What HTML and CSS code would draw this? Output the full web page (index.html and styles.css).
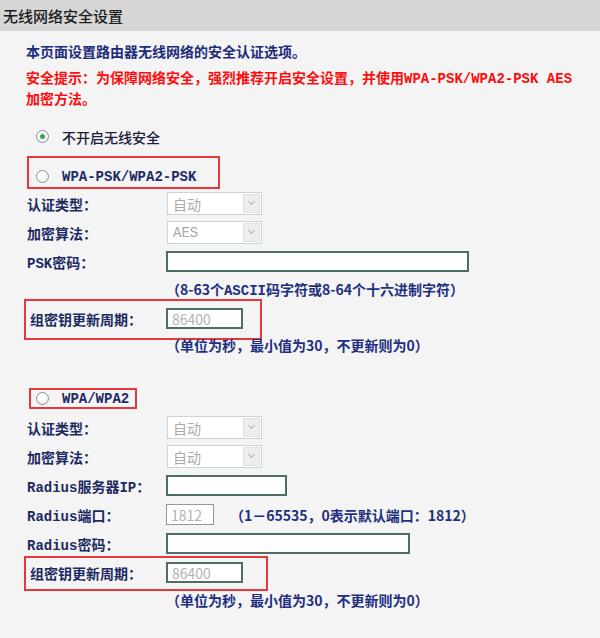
FILE: index.html
```html
<!DOCTYPE html>
<html lang="zh-CN">
<head>
    <meta charset="UTF-8">
    <title>无线网络安全设置</title>
    <link rel="stylesheet" href="styles.css">
</head>
<body>
    <header class="title">无线网络安全设置</header>
    <div class="page">
        <p class="intro">本页面设置路由器无线网络的安全认证选项。</p>
        <p class="warn">安全提示：为保障网络安全，强烈推荐开启安全设置，并使用<span class="mono">WPA-PSK/WPA2-PSK AES</span>加密方法。</p>

        <div class="opt opt-off"><span class="radio on"></span>不开启无线安全</div>

        <!-- WPA-PSK -->
        <div class="mark mark-psk">
            <div class="opt"><span class="radio"></span><span class="mono">WPA-PSK/WPA2-PSK</span></div>
        </div>
        <div class="row"><span class="lbl">认证类型：</span><span class="select"><span>自动</span><i class="arrow"></i></span></div>
        <div class="row"><span class="lbl">加密算法：</span><span class="select"><span class="mono">AES</span><i class="arrow"></i></span></div>
        <div class="row"><span class="lbl"><span class="mono">PSK</span>密码：</span><input class="field w-psk" type="text"></div>
        <div class="hint hint-top">（8-63个<span class="mono">ASCII</span>码字符或8-64个十六进制字符）</div>
        <div class="mark mark-period">
            <div class="row row-in"><span class="lbl">组密钥更新周期：</span><input class="field w-period" type="text" value="86400"></div>
        </div>
        <div class="hint hint-after">（单位为秒，最小值为30，不更新则为0）</div>

        <!-- WPA enterprise -->
        <div class="mark mark-wpa">
            <div class="opt opt-sm"><span class="radio"></span><span class="mono">WPA/WPA2</span></div>
        </div>
        <div class="row row-first"><span class="lbl">认证类型：</span><span class="select"><span>自动</span><i class="arrow"></i></span></div>
        <div class="row"><span class="lbl">加密算法：</span><span class="select"><span>自动</span><i class="arrow"></i></span></div>
        <div class="row"><span class="lbl"><span class="mono">Radius</span>服务器<span class="mono">IP</span>：</span><input class="field w-ip" type="text"></div>
        <div class="row"><span class="lbl"><span class="mono">Radius</span>端口：</span><span class="port"><input class="field w-port" type="text" value="1812"><span class="hint-inline">（1－65535，0表示默认端口：1812）</span></span></div>
        <div class="row"><span class="lbl"><span class="mono">Radius</span>密码：</span><input class="field w-pass" type="text"></div>
        <div class="mark mark-period2">
            <div class="row row-in"><span class="lbl">组密钥更新周期：</span><input class="field w-period" type="text" value="86400"></div>
        </div>
        <div class="hint hint-last">（单位为秒，最小值为30，不更新则为0）</div>
    </div>
</body>
</html>
```

FILE: styles.css
```css
body { margin: 0; background: #f4f4f4; font-family: "Noto Sans CJK SC", sans-serif; font-size: 14px; color: #1f2d6b; }
.mono { font-family: "Liberation Mono", "Noto Sans CJK SC", monospace; line-height: 1; }
.title { height: 31px; line-height: 31px; padding-left: 3px; background: #d6d6d6; color: #1c1c1c; font-size: 15px; font-weight: 500; }
.page { padding-bottom: 20px; }
.intro { margin: 10px 0 5px 26px; height: 21px; line-height: 21px; color: #1e2b7c; font-weight: 600; }
.warn { margin: 0 0 0 26px; max-width: 552px; line-height: 21px; color: #ff0d0d; font-weight: 600; }

.opt { display: flex; align-items: center; gap: 13px; height: 21px; color: #1f2b66; font-weight: 600; }
.opt-off { padding-left: 36px; margin-top: 17px; color: #1c1c3a; font-weight: 500; }
.opt-sm { height: 17px; }
.radio { width: 13px; height: 13px; box-sizing: border-box; border-radius: 50%; border: 1px solid #8c939b; background: radial-gradient(circle at 40% 35%, #fff 30%, #dfe3e8); display: flex; align-items: center; justify-content: center; }
.radio.on::after { content: ""; width: 5px; height: 5px; border-radius: 50%; background: #3ea34e; }

/* red annotation boxes */
.mark { border: 2px solid #e5383b; box-sizing: border-box; }
.mark-psk { margin: 9px 0 0 27px; width: 193px; height: 33px; padding: 8px 0 0 7px; }
.mark-period { margin-left: 24px; width: 238px; height: 41px; padding: 7px 0 0 4px; }
.mark-wpa { margin: 33px 0 0 29px; width: 108px; height: 21px; padding-left: 5px; }
.mark-period2 { margin: -2px 0 0 24px; width: 244px; height: 35px; padding: 4px 0 0 4px; }

.row { display: grid; grid-template-columns: 139px auto; align-items: center; height: 29px; padding-left: 27px; }
.row-in { grid-template-columns: 136px auto; height: 21px; padding-left: 0; }
.row-first { margin-top: 4px; }
.lbl { font-family: "Liberation Mono", "Noto Sans CJK SC", monospace; color: #1d2a62; white-space: nowrap; font-weight: 600; }

.select { width: 95px; height: 23px; box-sizing: border-box; margin-left: 1px; border: 1px solid #cfd1d1; background: #fff; display: flex; align-items: center; justify-content: space-between; color: #a9a9a9; padding: 0 1px 0 5px; }
.arrow { width: 17px; height: 19px; box-sizing: border-box; border: 1px solid #e0e0e0; background: #ededed; position: relative; }
.arrow::after { content: ""; position: absolute; left: 5px; top: 4px; width: 4px; height: 4px; border-right: 1.5px solid #b5b5b5; border-bottom: 1.5px solid #b5b5b5; transform: rotate(45deg); }

.field { height: 21px; box-sizing: border-box; border: 2px solid #4f6c65; background: #fff; padding: 0 4px; font: 14px "Noto Sans CJK SC", sans-serif; color: #b2b2b2; outline: none; }
.w-psk { width: 303px; }
.w-period { width: 77px; }
.w-ip { width: 121px; }
.w-port { width: 48px; border-color: #8e9c99; border-width: 1.5px; }
.w-pass { width: 244px; }
.port { display: flex; align-items: center; }

.hint, .hint-inline { color: #1f2f80; white-space: nowrap; font-weight: 600; }
.hint { padding-left: 166px; height: 20px; line-height: 20px; }
.hint-top { padding-top: 3px; }
.hint-after { margin-top: -5px; }
.hint-last { margin-top: -1px; }
.hint-inline { margin-left: 16px; }
```
